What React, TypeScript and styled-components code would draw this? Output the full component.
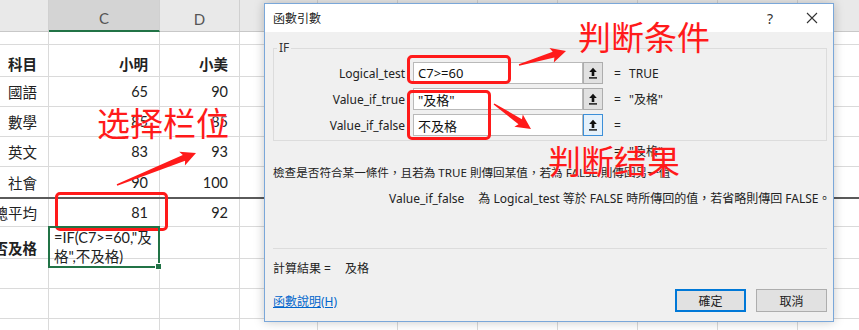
import React from "react";
import styled, { createGlobalStyle } from "styled-components";

const GlobalStyle = createGlobalStyle`
  html, body { margin: 0; padding: 0; background: #fff; }
  body { width: 859px; height: 330px; overflow: hidden; }
`;

const COL_TEMPLATE = "49px 111px 80px 78px 80px 80px 80px 80px 80px 80px 80px";
const GRID = "#dadada";
const SHEET_FONT = `"Lato", "Noto Sans CJK TC", sans-serif`;
const UI_FONT = `"Noto Sans", "Noto Sans CJK TC", sans-serif`;

const Page = styled.div`
  position: relative;
  width: 859px;
  height: 330px;
  overflow: hidden;
  font-family: ${SHEET_FONT};
  color: #222;
`;

/* ---------- spreadsheet ---------- */
const Sheet = styled.div`
  display: flex;
  flex-direction: column;
  width: 900px;
`;

const HeaderRow = styled.div`
  display: grid;
  grid-template-columns: ${COL_TEMPLATE};
  height: 32px;
  background: #e9e9e9;
  box-sizing: border-box;
  border-bottom: 1px solid #c8c8c8;
`;

const HeaderCell = styled.div<{ $sel?: boolean }>`
  display: flex;
  align-items: center;
  justify-content: center;
  padding-top: 6px;
  box-sizing: border-box;
  border-right: 1px solid #d0d0d0;
  background: ${(p) => (p.$sel ? "#d4d4d4" : "#e9e9e9")};
  border-bottom: ${(p) => (p.$sel ? "2px solid #217346" : "none")};
  margin-bottom: ${(p) => (p.$sel ? "-1px" : "0")};
  font-size: 15px;
  color: #555;
`;

const Row = styled.div<{ $h: number; $thick?: boolean }>`
  display: grid;
  grid-template-columns: ${COL_TEMPLATE};
  height: ${(p) => p.$h}px;
  box-sizing: border-box;
  border-bottom: ${(p) => (p.$thick ? "2px solid #5a5a5a" : `1px solid ${GRID}`)};
`;

const Cell = styled.div<{ $bold?: boolean; $pt?: number }>`
  display: flex;
  align-items: center;
  justify-content: flex-end;
  padding-right: 11px;
  padding-top: ${(p) => p.$pt ?? 0}px;
  box-sizing: border-box;
  border-right: 1px solid ${GRID};
  overflow: hidden;
  white-space: nowrap;
  font-size: 14.5px;
  font-weight: ${(p) => (p.$bold ? 700 : 400)};
  color: #222;
`;

const ActiveCell = styled.div`
  position: relative;
  display: flex;
  flex-direction: column;
  justify-content: flex-end;
  padding: 0 0 0 4px;
  margin: -1px 0 -1px -1px;
  box-sizing: border-box;
  border: 2px solid #217346;
  font-size: 14.5px;
  line-height: 19px;
  color: #222;
  white-space: nowrap;
  z-index: 1;
  &::after {
    content: "";
    position: absolute;
    right: -4px;
    bottom: -4px;
    width: 5px;
    height: 5px;
    background: #217346;
    border: 1px solid #fff;
  }
`;

const ClipLines = styled.div`
  overflow: hidden;
  display: flex;
  flex-direction: column;
  justify-content: flex-end;
  height: 100%;
  min-height: 0;
`;

const Line = styled.span`
  display: block;
  flex-shrink: 0;
  height: 19px;
`;

/* ---------- dialog ---------- */
const Dialog = styled.div`
  position: absolute;
  left: 264px;
  top: 3px;
  width: 570px;
  height: 319px;
  box-sizing: border-box;
  border: 1px solid #7aa7d9;
  background: #f0f0f0;
  box-shadow: 0 0 10px rgba(0, 0, 0, 0.22);
  font-family: ${UI_FONT};
  font-size: 12px;
  color: #222;
  display: flex;
  flex-direction: column;
`;

const TitleBar = styled.div`
  height: 28px;
  background: #fff;
  display: flex;
  align-items: center;
  justify-content: space-between;
  padding-left: 8px;
`;

const Title = styled.span`
  font-size: 12px;
  color: #222;
`;

const TitleButtons = styled.div`
  display: flex;
  align-items: center;
  height: 100%;
`;

const TitleBtn = styled.div`
  width: 42px;
  height: 100%;
  display: flex;
  align-items: center;
  justify-content: center;
  font-size: 14px;
  color: #333;
`;

const Body = styled.div`
  flex: 1;
  display: flex;
  flex-direction: column;
  padding: 0 6px 0 8px;
`;

const Group = styled.div`
  position: relative;
  margin-top: 16px;
  border: 1px solid #dcdcdc;
  padding: 13px 0 4px 0;
  display: flex;
  flex-direction: column;
  gap: 4px;
`;

const Legend = styled.span`
  position: absolute;
  left: 3px;
  top: -9px;
  padding: 0 2px;
  background: #f0f0f0;
  font-size: 12px;
  line-height: 16px;
  color: #333;
`;

const ArgRow = styled.div`
  display: flex;
  align-items: center;
  height: 22px;
`;

const ArgLabel = styled.span`
  width: 131px;
  text-align: right;
  margin-right: 8px;
  font-size: 12px;
  white-space: nowrap;
`;

const ArgInput = styled.div`
  width: 170px;
  height: 22px;
  box-sizing: border-box;
  border: 1px solid #b9b9b9;
  background: #fff;
  display: flex;
  align-items: center;
  padding-left: 4px;
  font-size: 13px;
  color: #111;
`;

const RefButton = styled.div<{ $focus?: boolean }>`
  width: 20px;
  height: 22px;
  box-sizing: border-box;
  border: 1px solid ${(p) => (p.$focus ? "#3c8fd8" : "#adadad")};
  background: ${(p) => (p.$focus ? "#e5f1fb" : "#e1e1e1")};
  display: flex;
  align-items: center;
  justify-content: center;
`;

const Eq = styled.span`
  margin-left: 11px;
  width: 7px;
  font-size: 12px;
`;

const ArgValue = styled.span`
  margin-left: 8px;
  font-size: 12px;
`;

const ResultRow = styled.div`
  display: flex;
  align-items: center;
  height: 18px;
  margin-top: 1px;
  padding-left: 330px;
`;

const Desc = styled.div`
  margin-top: 4px;
  line-height: 18px;
  font-size: 11.6px;
  white-space: nowrap;
`;

const DescDetail = styled.div`
  margin-top: 8px;
  padding-left: 116px;
  line-height: 18px;
  font-size: 12px;
  white-space: nowrap;
`;

const ArgName = styled.span`
  margin-right: 14px;
`;

const Separator = styled.div`
  margin-top: 40px;
  height: 1px;
  background: #dcdcdc;
`;

const CalcResult = styled.div`
  margin-top: 11px;
  line-height: 18px;
  font-size: 12px;
  display: flex;
`;

const CalcValue = styled.span`
  margin-left: 14px;
`;

const Footer = styled.div`
  margin-top: 11px;
  display: flex;
  align-items: center;
  justify-content: space-between;
`;

const HelpLink = styled.span`
  color: #0066cc;
  text-decoration: underline;
  font-size: 12px;
`;

const Buttons = styled.div`
  display: flex;
  gap: 10px;
`;

const DlgButton = styled.div<{ $primary?: boolean }>`
  width: 71px;
  height: 23px;
  box-sizing: border-box;
  display: flex;
  align-items: center;
  justify-content: center;
  background: #e1e1e1;
  border: 1px solid ${(p) => (p.$primary ? "#0078d7" : "#adadad")};
  box-shadow: ${(p) => (p.$primary ? "inset 0 0 0 1px #0078d7" : "none")};
  font-size: 12px;
  color: #222;
`;

/* ---------- annotations ---------- */
const Highlight = styled.div<{ $x: number; $y: number; $w: number; $h: number }>`
  position: absolute;
  left: ${(p) => p.$x}px;
  top: ${(p) => p.$y}px;
  width: ${(p) => p.$w}px;
  height: ${(p) => p.$h}px;
  box-sizing: border-box;
  border: 3px solid #ff1a1a;
  border-radius: 5px;
  pointer-events: none;
`;

const Note = styled.div<{ $x: number; $y: number }>`
  position: absolute;
  left: ${(p) => p.$x}px;
  top: ${(p) => p.$y}px;
  font-family: "Noto Sans CJK SC", sans-serif;
  font-size: 33px;
  line-height: 33px;
  color: #ff1a1a;
  white-space: nowrap;
  text-shadow: 0 0 1px rgba(255, 255, 255, 0.8);
`;

const ArrowLayer = styled.svg`
  position: absolute;
  left: 0;
  top: 0;
  pointer-events: none;
`;

function arrowPoints(x1: number, y1: number, x2: number, y2: number) {
  const tail = 1.5, body = 6, head = 15, headLen = 13;
  const dx = x2 - x1, dy = y2 - y1;
  const L = Math.hypot(dx, dy);
  const ux = dx / L, uy = dy / L;
  const nx = -uy, ny = ux;
  const bx = x2 - ux * headLen, by = y2 - uy * headLen;
  const pts = [
    [x1 + (nx * tail) / 2, y1 + (ny * tail) / 2],
    [bx + (nx * body) / 2, by + (ny * body) / 2],
    [bx - ux * 2 + (nx * head) / 2, by - uy * 2 + (ny * head) / 2],
    [x2, y2],
    [bx - ux * 2 - (nx * head) / 2, by - uy * 2 - (ny * head) / 2],
    [bx - (nx * body) / 2, by - (ny * body) / 2],
    [x1 - (nx * tail) / 2, y1 - (ny * tail) / 2],
  ];
  return pts.map((p) => p.map((v) => v.toFixed(1)).join(",")).join(" ");
}

const RefIcon = () => (
  <svg width="10" height="12" viewBox="0 0 10 12">
    <path d="M5 0.8 L1.2 5 H3.7 V9 H6.3 V5 H8.8 Z" fill="#111" />
    <rect x="1" y="10.2" width="8" height="1.4" fill="#111" />
  </svg>
);

const CloseIcon = () => (
  <svg width="12" height="12" viewBox="0 0 12 12">
    <path d="M1 1 L11 11 M11 1 L1 11" stroke="#333" strokeWidth="1.1" fill="none" />
  </svg>
);

type RowDef = { h: number; thick?: boolean; pt?: number; cells?: { t: string; b?: boolean }[] };

const rows: RowDef[] = [
  { h: 13 },
  { h: 32, pt: 6, cells: [{ t: "科目", b: true }, { t: "小明", b: true }, { t: "小美", b: true }] },
  { h: 30, cells: [{ t: "國語" }, { t: "65" }, { t: "90" }] },
  { h: 30, cells: [{ t: "數學" }, { t: "85" }, { t: "85" }] },
  { h: 30, cells: [{ t: "英文" }, { t: "83" }, { t: "93" }] },
  { h: 32, thick: true, cells: [{ t: "社會" }, { t: "90" }, { t: "100" }] },
  { h: 28, cells: [{ t: "總平均" }, { t: "81" }, { t: "92" }] },
];

const tailRows = [30, 30, 30];
const EXTRA_COLS = 8;

const blanks = (n: number) => Array.from({ length: n }, (_, i) => <Cell key={`b${i}`} />);

const args = [
  { label: "Logical_test", value: "C7>=60", result: "TRUE" },
  { label: "Value_if_true", value: '"及格"', result: '"及格"' },
  { label: "Value_if_false", value: "不及格", result: "", focus: true },
];

export default function App() {
  return (
    <Page>
      <GlobalStyle />
      <Sheet>
        <HeaderRow>
          <HeaderCell />
          <HeaderCell $sel>C</HeaderCell>
          <HeaderCell>D</HeaderCell>
          {Array.from({ length: EXTRA_COLS }, (_, i) => (
            <HeaderCell key={i} />
          ))}
        </HeaderRow>
        {rows.map((r, i) => (
          <Row key={i} $h={r.h} $thick={r.thick}>
            {r.cells
              ? r.cells.map((c, j) => (
                  <Cell key={j} $bold={c.b} $pt={r.pt}>
                    {c.t}
                  </Cell>
                ))
              : blanks(3)}
            {blanks(EXTRA_COLS)}
          </Row>
        ))}
        <Row $h={32}>
          <Cell $bold>是否及格</Cell>
          <ActiveCell>
            <ClipLines>
              <Line>=IF(C7&gt;=60,"及</Line>
              <Line>格",不及格)</Line>
            </ClipLines>
          </ActiveCell>
          {blanks(1 + EXTRA_COLS)}
        </Row>
        {tailRows.map((h, i) => (
          <Row key={`t${i}`} $h={h}>
            {blanks(3 + EXTRA_COLS)}
          </Row>
        ))}
      </Sheet>

      <Dialog>
        <TitleBar>
          <Title>函數引數</Title>
          <TitleButtons>
            <TitleBtn>?</TitleBtn>
            <TitleBtn>
              <CloseIcon />
            </TitleBtn>
          </TitleButtons>
        </TitleBar>
        <Body>
          <Group>
            <Legend>IF</Legend>
            {args.map((a) => (
              <ArgRow key={a.label}>
                <ArgLabel>{a.label}</ArgLabel>
                <ArgInput>{a.value}</ArgInput>
                <RefButton $focus={a.focus}>
                  <RefIcon />
                </RefButton>
                <Eq>=</Eq>
                <ArgValue>{a.result}</ArgValue>
              </ArgRow>
            ))}
          </Group>
          <ResultRow>
            <Eq>=</Eq>
            <ArgValue>"及格"</ArgValue>
          </ResultRow>
          <Desc>檢查是否符合某一條件，且若為 TRUE 則傳回某值，若為 FALSE 則傳回另一值</Desc>
          <DescDetail>
            <ArgName>Value_if_false</ArgName>為 Logical_test 等於 FALSE 時所傳回的值，若省略則傳回 FALSE。
          </DescDetail>
          <Separator />
          <CalcResult>
            計算結果 =<CalcValue>及格</CalcValue>
          </CalcResult>
          <Footer>
            <HelpLink>函數說明(H)</HelpLink>
            <Buttons>
              <DlgButton $primary>確定</DlgButton>
              <DlgButton>取消</DlgButton>
            </Buttons>
          </Footer>
        </Body>
      </Dialog>

      <Highlight $x={407} $y={55} $w={104} $h={29} />
      <Highlight $x={407} $y={90} $w={84} $h={50} />
      <Highlight $x={55} $y={192} $w={113} $h={39} />

      <ArrowLayer width="859" height="330" viewBox="0 0 859 330">
        <polygon points={arrowPoints(519, 65, 566, 51)} fill="#ff1a1a" />
        <polygon points={arrowPoints(494, 104, 531, 129)} fill="#ff1a1a" />
        <polygon points={arrowPoints(117, 185, 196, 153)} fill="#ff1a1a" />
      </ArrowLayer>

      <Note $x={97} $y={106}>选择栏位</Note>
      <Note $x={578} $y={20}>判断条件</Note>
      <Note $x={548} $y={144}>判断结果</Note>
    </Page>
  );
}
